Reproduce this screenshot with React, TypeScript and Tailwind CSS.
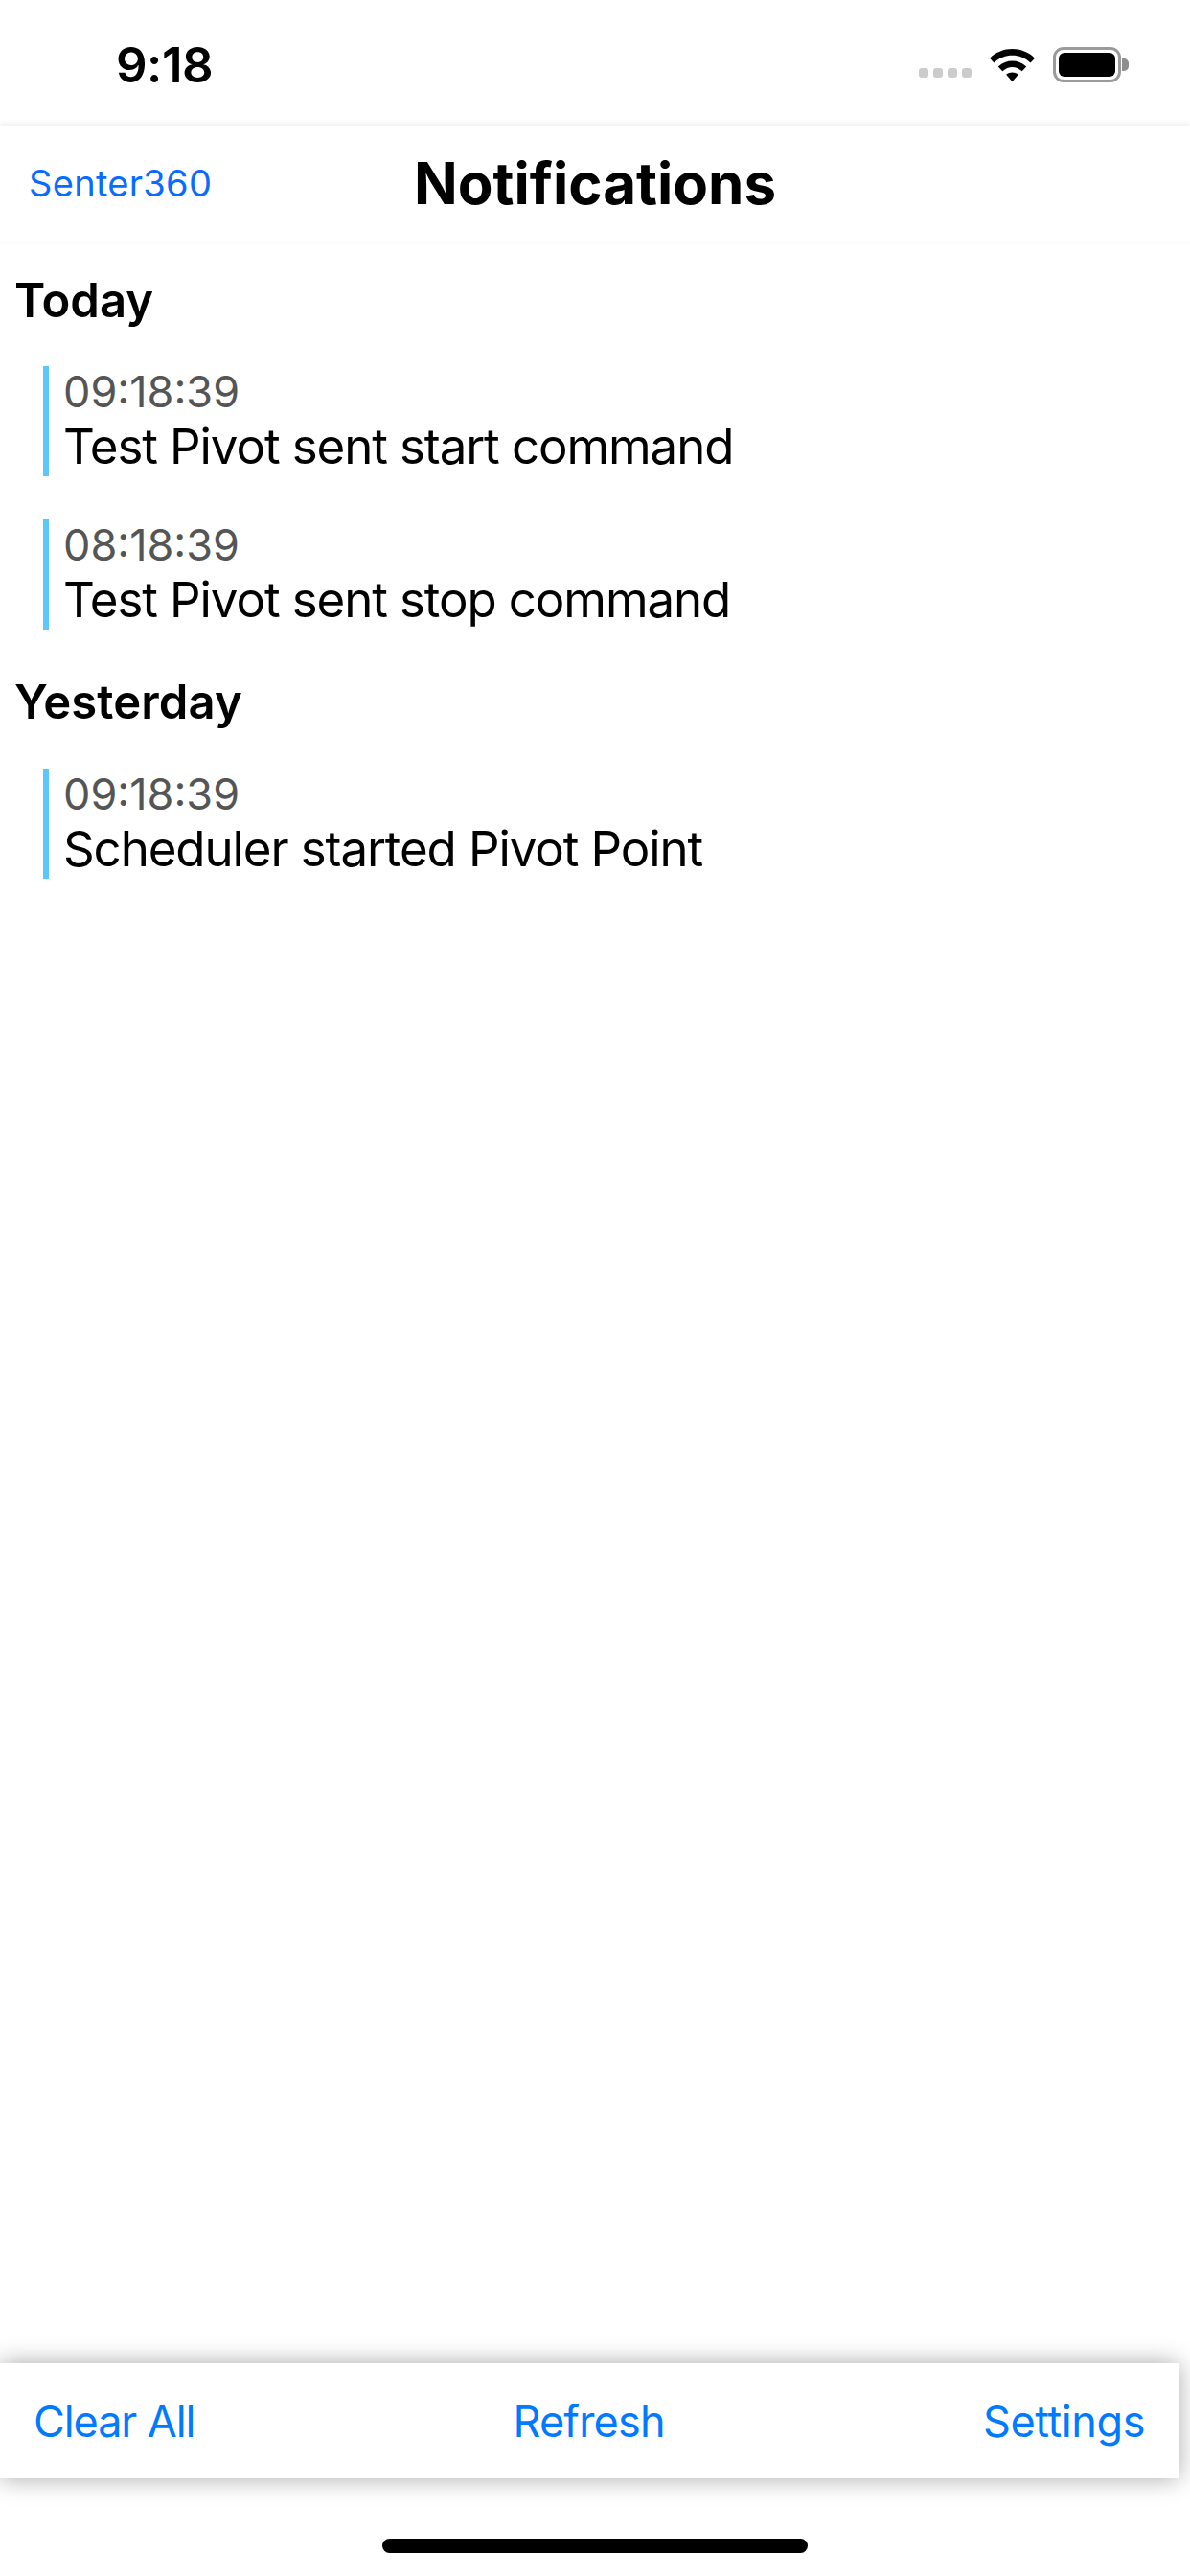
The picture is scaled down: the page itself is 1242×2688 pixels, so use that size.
const font = { fontFamily: "Inter, 'Liberation Sans', sans-serif" };

function Row({ time, text }: { time: string; text: string }) {
  return (
    <div className="ml-[45px] flex h-[115px] flex-col justify-center border-l-[6px] border-[#5ac8fa] pb-[5px] pl-[15px]">
      <div className="text-[45px] leading-[57px] text-[#555555]">{time}</div>
      <div className="text-[51px] leading-[57px] tracking-[-1.1px] text-black">{text}</div>
    </div>
  );
}

export default function App() {
  return (
    <div className="flex h-[2688px] w-[1242px] flex-col overflow-hidden bg-white" style={font}>
      <div className="flex h-[131px] items-center justify-between pt-[4px]">
        <span className="ml-[121px] text-[51px] font-semibold leading-none tracking-[-0.5px] text-black">9:18</span>
        <div className="mr-[64px] flex items-center">
          <div className="mt-[16px] flex gap-[5px]">
            <span className="h-[10px] w-[10px] rounded-[3px] bg-[#cccccc]" />
            <span className="h-[10px] w-[10px] rounded-[3px] bg-[#cccccc]" />
            <span className="h-[10px] w-[10px] rounded-[3px] bg-[#cccccc]" />
            <span className="h-[10px] w-[10px] rounded-[3px] bg-[#cccccc]" />
          </div>
          <svg className="ml-[19px]" width="47" height="36" viewBox="0 0 48 36">
            <path d="M0 10.5 C13.5 -2.5 34.5 -2.5 48 10.5 L43.5 15.5 C32 5 16 5 4.5 15.5 Z" fill="#000" />
            <path d="M9 19.5 C18 11.5 30 11.5 39 19.5 L34.5 24.5 C27.5 18.5 20.5 18.5 13.5 24.5 Z" fill="#000" />
            <path d="M17.5 28 C21.5 25 26.5 25 30.5 28 L24 35.5 Z" fill="#000" />
          </svg>
          <div className="ml-[19px] flex items-center">
            <div className="flex h-[37px] w-[71px] rounded-[11px] border-[3px] border-[#9a9a9a] p-[3px]">
              <div className="flex-1 rounded-[6px] bg-black" />
            </div>
            <div className="ml-[1px] h-[13px] w-[7px] rounded-r-[5px] bg-[#8e8e8e]" />
          </div>
        </div>
      </div>

      <div className="relative flex h-[122px] items-center justify-center pb-[2px] shadow-[0_-2px_6px_rgba(0,0,0,0.07)]">
        <span className="absolute left-[30px] text-[38px] leading-none tracking-[0.3px] text-[#0a6cff]">Senter360</span>
        <span className="text-[60px] font-bold leading-none text-black">Notifications</span>
      </div>

      <div className="mt-[32px] ml-[15px] h-[57px] text-[49px] font-semibold leading-[57px] text-black">Today</div>
      <div className="mt-[40px] flex flex-col gap-[45px]">
        <Row time="09:18:39" text="Test Pivot sent start command" />
        <Row time="08:18:39" text="Test Pivot sent stop command" />
      </div>

      <div className="mt-[47px] ml-[15px] h-[57px] text-[49px] font-semibold leading-[57px] tracking-[0.1px] text-black">Yesterday</div>
      <div className="mt-[41px]">
        <Row time="09:18:39" text="Scheduler started Pivot Point" />
      </div>

      <div className="flex-1" />

      <div className="flex h-[120px] w-[1230px] items-center justify-between bg-white pl-[35px] pr-[35px] text-[45px] leading-none text-[#007aff] shadow-[0_0_24px_rgba(0,0,0,0.35)]">
        <span className="tracking-[-1.1px]">Clear All</span>
        <span className="tracking-[-0.8px]">Refresh</span>
        <span className="tracking-[-0.4px]">Settings</span>
      </div>

      <div className="flex h-[102px] justify-center pt-[63px]">
        <div className="h-[15px] w-[444px] rounded-full bg-black" />
      </div>
    </div>
  );
}
